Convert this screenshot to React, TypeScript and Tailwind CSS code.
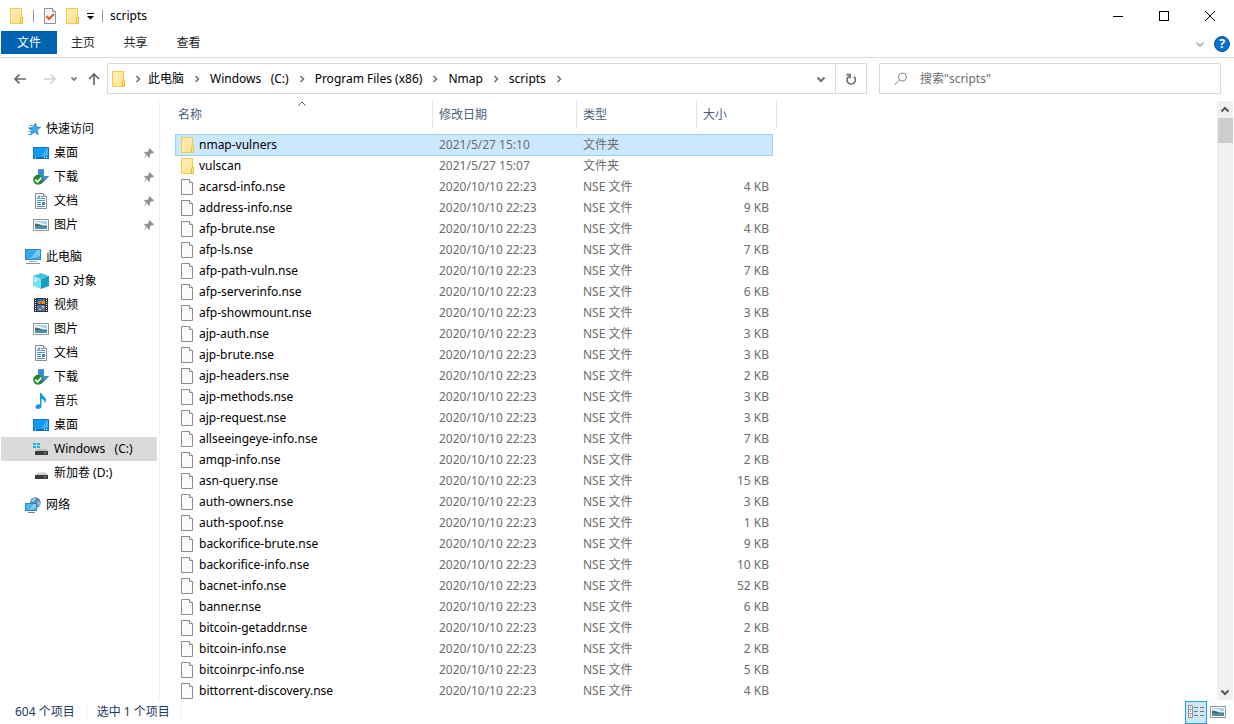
import React from "react";

type FileRow = { name: string; date: string; type: string; size: string };

const folders: FileRow[] = [
  { name: "nmap-vulners", date: "2021/5/27 15:10", type: "文件夹", size: "" },
  { name: "vulscan", date: "2021/5/27 15:07", type: "文件夹", size: "" },
];

const scripts: [string, number][] = [
  ["acarsd-info.nse", 4],
  ["address-info.nse", 9],
  ["afp-brute.nse", 4],
  ["afp-ls.nse", 7],
  ["afp-path-vuln.nse", 7],
  ["afp-serverinfo.nse", 6],
  ["afp-showmount.nse", 3],
  ["ajp-auth.nse", 3],
  ["ajp-brute.nse", 3],
  ["ajp-headers.nse", 2],
  ["ajp-methods.nse", 3],
  ["ajp-request.nse", 3],
  ["allseeingeye-info.nse", 7],
  ["amqp-info.nse", 2],
  ["asn-query.nse", 15],
  ["auth-owners.nse", 3],
  ["auth-spoof.nse", 1],
  ["backorifice-brute.nse", 9],
  ["backorifice-info.nse", 10],
  ["bacnet-info.nse", 52],
  ["banner.nse", 6],
  ["bitcoin-getaddr.nse", 2],
  ["bitcoin-info.nse", 2],
  ["bitcoinrpc-info.nse", 5],
  ["bittorrent-discovery.nse", 4],
];

const rows: FileRow[] = [
  ...folders,
  ...scripts.map(([name, kb]) => ({
    name,
    date: "2020/10/10 22:23",
    type: "NSE 文件",
    size: `${kb} KB`,
  })),
];

const iconClass = "block h-4 w-4 shrink-0";

function FolderIcon() {
  return (
    <svg className={iconClass} viewBox="0 0 16 16" aria-hidden="true">
      <rect x="1.5" y="0.5" width="11" height="15" fill="#ffe699" stroke="#f2cb56" />
      <path d="M2 1h10v2L2 13z" fill="#ffefb8" opacity=".6" />
      <path d="M11.5 15.5v-5l1-1.5h1v6.5z" fill="#ffe48e" stroke="#e9bd3f" />
    </svg>
  );
}

function PageIcon() {
  return (
    <svg className={iconClass} viewBox="0 0 16 16" aria-hidden="true">
      <path d="M1.5 .5h8l3 3v12h-11z" fill="#f9fafa" stroke="#8c8c8c" />
      <path d="M9.5 .5v3h3" fill="#fff" stroke="#8c8c8c" />
    </svg>
  );
}

function PropertiesIcon() {
  return (
    <svg className={iconClass} viewBox="0 0 16 16" aria-hidden="true">
      <path d="M2.5 .5h8l3 3v12h-11z" fill="#f5f7f9" stroke="#8e9196" />
      <path d="M10.5 .5v3h3" fill="#fff" stroke="#8e9196" />
      <path d="M4.5 8l2.5 3 5-5" fill="none" stroke="#e2542b" strokeWidth="2" />
    </svg>
  );
}

function StarIcon() {
  return (
    <svg className={iconClass} viewBox="0 0 16 16" aria-hidden="true">
      <path d="M10.500 2l1 4 4 .3-3.400 2.700 1.200 4.500-3.800-2.300L5.700 14l1-4.400-3-2.600 4.200-.6z" fill="#39a9ec" stroke="#1779bd" strokeWidth=".7" />
      <path d="M5 4.500h3M4 7.500h3M3.500 10.500h3M3 13.500h3" stroke="#2e8fd0" strokeWidth=".9" />
    </svg>
  );
}

function DesktopIcon() {
  return (
    <svg className={iconClass} viewBox="0 0 16 16" aria-hidden="true">
      <rect x=".5" y="2.5" width="15" height="11" fill="#109bf7" stroke="#1173c0" />
      <path d="M15 3v7L8 12 14 3z" fill="#43b5ff" />
      <path d="M1 12.5h14" stroke="#086bb8" />
      <path d="M2 12.5h1M11 12.5h1M13 12.5h1" stroke="#fff" />
    </svg>
  );
}

function DownloadIcon() {
  return (
    <svg className={iconClass} viewBox="0 0 16 16" aria-hidden="true">
      <path d="M5.5 .5h5v7h5L9 14 3 8h2.5z" fill="#378be0" stroke="#2777c7" strokeWidth=".7" />
      <circle cx="5.2" cy="10.7" r="5" fill="#25882c" />
      <path d="M2.3 10.6l2.2 2.3 4-4.3" fill="none" stroke="#fff" strokeWidth="1.7" />
    </svg>
  );
}

function DocumentIcon() {
  return (
    <svg className={iconClass} viewBox="0 0 16 16" aria-hidden="true">
      <path d="M2.5 .5h8l3 3v12h-11z" fill="#fff" stroke="#8e8e8e" />
      <path d="M10.5 .5v3h3" fill="#eee" stroke="#8e8e8e" />
      <path d="M4 6l2-3.500 1 3.500M4.500 5h2M8 3.500h2M8 5.500h4M4 7.500h8M4 9.500h4M4 11.500h4M4 13.500h8" fill="none" stroke="#4694d1" />
      <path d="M9 9h3v3H9z" fill="#328cd1" />
      <path d="M9 11h3v1H9z" fill="#4d8258" />
    </svg>
  );
}

function PictureIcon() {
  return (
    <svg className={iconClass} viewBox="0 0 16 16" aria-hidden="true">
      <rect x=".5" y="2.500" width="15" height="11" fill="#fff" stroke="#969696" />
      <rect x="2" y="4" width="12" height="8" fill="#a6d4f2" />
      <path d="M2 5h5l4 2h3v1H2z" fill="#e3f2fa" />
      <path d="M2 6.500l4 .7 4 1.500h4v1H2z" fill="#3d6b55" />
      <path d="M2 9l6 1h6v2H2z" fill="#4e8fba" />
    </svg>
  );
}

function ComputerIcon() {
  return (
    <svg className={iconClass} viewBox="0 0 16 16" aria-hidden="true">
      <rect x=".5" y=".5" width="15" height="10" fill="#35aaf2" stroke="#3d81ac" />
      <path d="M15 1v6L5 10 12 1z" fill="#71cbff" />
      <path d="M4 12.500h8" stroke="#94a7b5" />
      <path d="M1 14.500h14" stroke="#7891a4" />
    </svg>
  );
}

function CubeIcon() {
  return (
    <svg className={iconClass} viewBox="0 0 16 16" aria-hidden="true">
      <path d="M8 0l8 3-8 3-8-3z" fill="#3cc3d8" />
      <path d="M0 3l8 3v10l-8-3z" fill="#7ce1ec" />
      <path d="M16 3L8 6v10l8-3z" fill="#139fc5" />
      <path d="M1 4l6 2-6 4z" fill="#b6f0f4" />
    </svg>
  );
}

function VideoIcon() {
  return (
    <svg className={iconClass} viewBox="0 0 16 16" aria-hidden="true">
      <rect x="1" y="1" width="14" height="14" fill="#343434" />
      <path d="M2.500 1v14M13.500 1v14" stroke="#eee" strokeWidth="1" strokeDasharray="1 1" />
      <rect x="4" y="2" width="8" height="5" fill="#2f62a8" />
      <rect x="4" y="8" width="8" height="6" fill="#3b7ace" />
      <path d="M5 5.500l2-2 2 1 2-1.500 1 1v3H6z" fill="#c9992f" />
      <path d="M7 5h2v2H7zM6 10h2v1H6zM9 12h2v1H9z" fill="#c74932" />
      <path d="M9 9h2v2H9zM6 12h2v1H6z" fill="#e5c563" />
    </svg>
  );
}

function MusicIcon() {
  return (
    <svg className={iconClass} viewBox="0 0 16 16" aria-hidden="true">
      <path d="M7 0h1.500c.3 3 5 4 4.500 7.500-.2 1.500-1 2.500-1.500 3 .5-2.500-.5-4-3-4.500v7c0 2-1.500 3-3.500 3s-2.500-1-2.500-2.200C2.500 12 4 11 7 11.300z" fill="#1698e8" />
    </svg>
  );
}

function DriveIcon() {
  return (
    <svg className={iconClass} viewBox="0 0 16 16" aria-hidden="true">
      <path d="M4 7.500h9l2 3H2z" fill="#cfcfcf" />
      <rect x="2" y="10" width="13" height="4" fill="#3c3c3c" />
      <rect x="11" y="11.500" width="2" height="1" fill="#4be54d" />
    </svg>
  );
}

function SystemDriveIcon() {
  return (
    <svg className={iconClass} viewBox="0 0 16 16" aria-hidden="true">
      <path d="M0 2h3v2H0zM4 2h3v2H4zM0 5h3v2H0zM4 5h3v2H4z" fill="#15b2f1" />
      <path d="M4 8h9l2 2.500H2z" fill="#bcbcbc" />
      <rect x="2" y="10" width="13" height="4" fill="#3c3c3c" />
      <rect x="11" y="11.500" width="2" height="1" fill="#4be54d" />
    </svg>
  );
}

function NetworkIcon() {
  return (
    <svg className={iconClass} viewBox="0 0 16 16" aria-hidden="true">
      <circle cx="10.300" cy="5.500" r="5.300" fill="#4787b3" />
      <path d="M6 4l3-3 2 .5-1 2.500-3 1zM12 5l2-1 1 3-2 2z" fill="#a9cde0" />
      <rect x=".5" y="6.500" width="11" height="7" fill="#4cb8f4" stroke="#3581b3" />
      <path d="M11 7v3l-7 3 5-6z" fill="#88d7ff" />
      <path d="M3 15.500h7" stroke="#5d8ba9" />
    </svg>
  );
}

function PinIcon() {
  return (
    <svg className="h-3 w-3 shrink-0" viewBox="0 0 12 12" aria-hidden="true">
      <path d="M6.500 1l4.500 4.500-1.200.8-1-.2-2 2 .1 2.300L6 11 3.800 8.300.8 11.200 1 10.500 3.300 7.800 1 5.600l1-.8 2.200.1L6 3l-.3-1.200z" fill="#8a9399" />
    </svg>
  );
}

type ChevronProps = { dir: "right" | "down" | "up"; tone: string; weight?: number };

const chevronPaths = {
  right: "M3.500 2l3 3-3 3",
  down: "M1.500 3.500L5 7l3.500-3.500",
  up: "M1.500 6.500L5 3l3.500 3.500",
};

function Chevron({ dir, tone, weight = 1.5 }: ChevronProps) {
  return (
    <svg className="block h-2.5 w-2.5 shrink-0" viewBox="0 0 10 10" fill="none" stroke={tone} strokeWidth={weight} aria-hidden="true">
      <path d={chevronPaths[dir]} />
    </svg>
  );
}

function SmallChevron() {
  return (
    <svg className="block h-2.5 w-2.5 shrink-0" viewBox="0 0 10 10" fill="none" stroke="#808080" strokeWidth="1.800" aria-hidden="true">
      <path d="M2.500 3.500L5 6l2.500-2.500" />
    </svg>
  );
}

function Arrow({ dir, tone }: { dir: "left" | "right" | "up"; tone: string }) {
  const d = {
    left: "M13 7H2M6.500 2.500L2 7l4.500 4.500",
    right: "M1 7h11M7.500 2.500L12 7l-4.500 4.500",
    up: "M7 13V2M2 7l5-5 5 5",
  }[dir];
  return (
    <svg className="block h-3.5 w-3.5 shrink-0" viewBox="0 0 14 14" fill="none" stroke={tone} strokeWidth="1.700" aria-hidden="true">
      <path d={d} />
    </svg>
  );
}

type NavItem = { label: string; icon: React.ReactNode; pinned?: boolean; selected?: boolean };
type NavGroup = { label: string; icon: React.ReactNode; items: NavItem[] };

const groups: NavGroup[] = [
  {
    label: "快速访问",
    icon: <StarIcon />,
    items: [
      { label: "桌面", icon: <DesktopIcon />, pinned: true },
      { label: "下载", icon: <DownloadIcon />, pinned: true },
      { label: "文档", icon: <DocumentIcon />, pinned: true },
      { label: "图片", icon: <PictureIcon />, pinned: true },
    ],
  },
  {
    label: "此电脑",
    icon: <ComputerIcon />,
    items: [
      { label: "3D 对象", icon: <CubeIcon /> },
      { label: "视频", icon: <VideoIcon /> },
      { label: "图片", icon: <PictureIcon /> },
      { label: "文档", icon: <DocumentIcon /> },
      { label: "下载", icon: <DownloadIcon /> },
      { label: "音乐", icon: <MusicIcon /> },
      { label: "桌面", icon: <DesktopIcon /> },
      { label: "Windows   (C:)", icon: <SystemDriveIcon />, selected: true },
      { label: "新加卷 (D:)", icon: <DriveIcon /> },
    ],
  },
  { label: "网络", icon: <NetworkIcon />, items: [] },
];

function TitleBar() {
  return (
    <header className="flex h-[31px] shrink-0 items-center justify-between">
      <div className="flex items-center pl-[9px]">
        <FolderIcon />
        <span className="ml-2 h-3 w-px bg-[#9a9a9a]" />
        <button type="button" aria-label="属性" className="ml-2">
          <PropertiesIcon />
        </button>
        <button type="button" aria-label="新建文件夹" className="ml-[7px]">
          <FolderIcon />
        </button>
        <button type="button" aria-label="自定义快速访问工具栏" className="ml-1">
          <svg className="block h-2.5 w-2.5" viewBox="0 0 10 10" aria-hidden="true">
            <path d="M2 2.500h7" stroke="#000" />
            <path d="M2 5h7L5.500 8.500z" fill="#000" />
          </svg>
        </button>
        <span className="ml-[7px] h-3 w-px bg-[#9a9a9a]" />
        <h1 className="ml-[7px]">scripts</h1>
      </div>
      <div className="flex self-stretch pr-px">
        <button type="button" aria-label="最小化" className="flex w-[46px] items-center justify-center">
          <svg className="h-3 w-3" viewBox="0 0 12 12" aria-hidden="true"><path d="M1 6.500h10" stroke="#000" /></svg>
        </button>
        <button type="button" aria-label="最大化" className="flex w-[46px] items-center justify-center">
          <svg className="h-3 w-3" viewBox="0 0 12 12" aria-hidden="true"><rect x="1.500" y="1.500" width="9" height="9" fill="none" stroke="#000" /></svg>
        </button>
        <button type="button" aria-label="关闭" className="flex w-[46px] items-center justify-center">
          <svg className="h-3 w-3" viewBox="0 0 12 12" aria-hidden="true"><path d="M1 1l10 10M11 1L1 11" stroke="#000" /></svg>
        </button>
      </div>
    </header>
  );
}

function Ribbon() {
  return (
    <div className="flex h-[27px] shrink-0 items-start justify-between border-b border-[#dadbdc] pl-px">
      <nav className="flex">
        <button type="button" className="h-[23px] w-14 bg-[#0063b1] text-white">文件</button>
        <button type="button" className="h-[23px] w-[52px] pt-px text-[#262626]">主页</button>
        <button type="button" className="h-[23px] w-[53px] pt-px text-[#262626]">共享</button>
        <button type="button" className="h-[23px] w-[53px] pt-px text-[#262626]">查看</button>
      </nav>
      <div className="flex items-center gap-[9px] pt-[5px] pr-1">
        <button type="button" aria-label="展开功能区"><Chevron dir="down" tone="#a0a0a0" /></button>
        <button type="button" aria-label="帮助" className="flex h-4 w-4 items-center justify-center rounded-full border border-[#0b4f93] bg-[#0a6fd0] text-[12px] leading-none font-bold text-white">
          ?
        </button>
      </div>
    </div>
  );
}

const crumbs = ["此电脑", "Windows   (C:)", "Program Files (x86)", "Nmap", "scripts"];

function AddressRow() {
  return (
    <div className="flex shrink-0 items-center pt-[5px] pr-[13px] pb-[7px] pl-[13px]">
      <div className="flex w-[94px] shrink-0 items-center">
        <button type="button" aria-label="后退"><Arrow dir="left" tone="#666" /></button>
        <button type="button" aria-label="前进" className="ml-4"><Arrow dir="right" tone="#d2d2d2" /></button>
        <button type="button" aria-label="最近位置" className="ml-3"><SmallChevron /></button>
        <button type="button" aria-label="上移" className="ml-2"><Arrow dir="up" tone="#666" /></button>
      </div>
      <div className="flex h-[31px] min-w-0 grow items-stretch border border-[#d9d9d9]">
        <div className="flex min-w-0 grow items-center pl-[3px]">
          <FolderIcon />
          <span className="flex w-[21px] justify-center"><Chevron dir="right" tone="#6f6f6f" /></span>
          {crumbs.map((crumb) => (
            <React.Fragment key={crumb}>
              <button type="button" className="whitespace-pre">{crumb}</button>
              <span className="flex w-[26px] shrink-0 justify-center"><Chevron dir="right" tone="#6f6f6f" /></span>
            </React.Fragment>
          ))}
        </div>
        <button type="button" aria-label="以前的位置" className="flex w-7 items-center justify-center"><Chevron dir="down" tone="#707070" weight={2} /></button>
        <button type="button" aria-label="刷新" className="flex w-[31px] items-center justify-center border-l border-[#d9d9d9]">
          <svg className="h-3 w-3" viewBox="0 0 12 12" fill="none" stroke="#6f6f6f" strokeWidth="1.600" aria-hidden="true">
            <path d="M9 3.700A4.200 4.200 0 1 1 4.300 3.100" />
            <path d="M1.500 1.600h3.700v3.900" />
          </svg>
        </button>
      </div>
      <div className="ml-3 flex h-[31px] w-[342px] min-w-0 shrink-0 items-center border border-[#d9d9d9] pl-[14px]">
        <svg className="h-3.5 w-3.5 shrink-0" viewBox="0 0 14 14" fill="none" stroke="#858585" aria-hidden="true">
          <circle cx="8.500" cy="5" r="4" />
          <path d="M5.500 8L.5 13" />
        </svg>
        <input type="search" aria-label="搜索" placeholder={'搜索"scripts"'} className="ml-3 min-w-0 grow bg-transparent outline-none placeholder:text-[#6d6d6d]" />
      </div>
    </div>
  );
}

function Sidebar() {
  return (
    <nav className="flex w-40 shrink-0 flex-col gap-2 overflow-hidden border-r border-[#f0f0f0] pt-4 pl-px">
      {groups.map((group) => (
        <section key={group.label} className="pr-0.5">
          <a href="#" className="flex h-6 items-center gap-[5px] pl-6">
            {group.icon}
            <span>{group.label}</span>
          </a>
          {group.items.map((item) => (
            <a
              key={item.label}
              href="#"
              className={
                item.selected
                  ? "flex h-6 items-center gap-[5px] bg-[#d9d9d9] pl-8"
                  : "flex h-6 items-center gap-[5px] pl-8"
              }
            >
              {item.icon}
              <span className="grow whitespace-pre">{item.label}</span>
              {item.pinned && <span className="pr-0.5"><PinIcon /></span>}
            </a>
          ))}
        </section>
      ))}
    </nav>
  );
}

const headers = ["名称", "修改日期", "类型", "大小"];

function FileTable() {
  return (
    <table className="w-[602px] table-fixed border-separate border-spacing-0">
      <colgroup>
        <col className="w-[258px]" />
        <col className="w-36" />
        <col className="w-[120px]" />
        <col className="w-[76px]" />
        <col className="w-1" />
      </colgroup>
      <thead>
        <tr>
          {headers.map((label, i) => (
            <th key={label} colSpan={i === 3 ? 2 : 1} className="p-0 pb-[5px] text-left font-normal text-[#4c607a]">
              <div className={i === 0 ? "relative flex h-7 items-center border-r border-[#e5e5e5] pl-[3px]" : "flex h-7 items-center border-r border-[#e5e5e5] pl-1.5"}>
                {label}
                {i === 0 && (
                  <span className="absolute inset-x-0 -top-0.5 flex justify-center pr-1">
                    <Chevron dir="up" tone="#5a5a5a" weight={1} />
                  </span>
                )}
              </div>
            </th>
          ))}
        </tr>
      </thead>
      <tbody>
        {rows.map((row, i) => {
          const cell = i === 0 ? "h-[21px] border-t border-[#99d1ff] bg-[#cce8ff] shadow-[0_1px_0_#99d1ff]" : "h-[21px]";
          return (
            <tr key={row.name} className="text-[#6d6d6d]">
              <td className={`${cell} ${i === 0 ? "border-l" : "pl-px"} py-0 pr-0 text-black`}>
                <span className="flex items-center gap-[3px] pl-1">
                  {i < 2 ? <FolderIcon /> : <PageIcon />}
                  {row.name}
                </span>
              </td>
              <td className={`${cell} py-0 pr-0 pl-1.5`}>{row.date}</td>
              <td className={`${cell} py-0 pr-0 pl-1.5`}>{row.type}</td>
              <td className={`${cell} ${i === 0 ? "border-r" : ""} py-0 pr-1 pl-0 text-right`}>{row.size}</td>
              <td className="p-0" />
            </tr>
          );
        })}
      </tbody>
    </table>
  );
}

function ScrollBar() {
  return (
    <div className="mr-px flex w-4 shrink-0 flex-col items-center bg-[#f0f0f0]">
      <button type="button" aria-label="向上滚动" className="flex h-[17px] w-full shrink-0 items-center justify-center">
        <Chevron dir="up" tone="#555" weight={2} />
      </button>
      <div className="h-[25px] w-[15px] bg-[#cdcdcd]" />
      <button type="button" aria-label="向下滚动" className="mt-auto flex h-[17px] w-full shrink-0 items-center justify-center">
        <Chevron dir="down" tone="#555" weight={2} />
      </button>
    </div>
  );
}

function StatusBar() {
  return (
    <footer className="flex h-6 shrink-0 items-center justify-between pr-2 pl-[15px] text-[#1e395b]">
      <div className="flex items-center">
        <span className="border-r border-[#ececec] pr-[11px] leading-3">604 个项目</span>
        <span className="border-r border-[#ececec] px-2.5 leading-3">选中 1 个项目</span>
      </div>
      <div className="flex items-center gap-[3px]">
        <button type="button" aria-label="详细信息" className="flex h-[23px] w-[22px] items-center justify-center border border-[#26a0da] bg-[#cbe8f6]">
          <svg className="block h-3.5 w-4 shrink-0" viewBox="0 0 16 14" aria-hidden="true">
            <path d="M.5 .5h4v12h-4zM.5 4.500h4M.5 8.500h4" fill="#fff" stroke="#929292" />
            <path d="M2 2h1v1H2z" fill="#557" />
            <path d="M2 6h1v1H2z" fill="#368abd" />
            <path d="M2 10h1v1H2z" fill="#b33" />
            <path d="M6 2.500h4M12 2.500h4M6 6.500h4M12 6.500h4M6 10.500h4M12 10.500h4" stroke="#777" />
          </svg>
        </button>
        <button type="button" aria-label="大图标"><PictureIcon /></button>
      </div>
    </footer>
  );
}

export default function App() {
  return (
    <div className="flex h-screen flex-col overflow-hidden bg-white font-['Noto_Sans','Noto_Sans_CJK_SC',sans-serif] text-[12px] leading-4 text-black">
      <TitleBar />
      <Ribbon />
      <AddressRow />
      <div className="flex min-h-0 grow">
        <Sidebar />
        <main className="min-w-0 grow overflow-hidden pl-[15px]">
          <FileTable />
        </main>
        <ScrollBar />
      </div>
      <StatusBar />
    </div>
  );
}
